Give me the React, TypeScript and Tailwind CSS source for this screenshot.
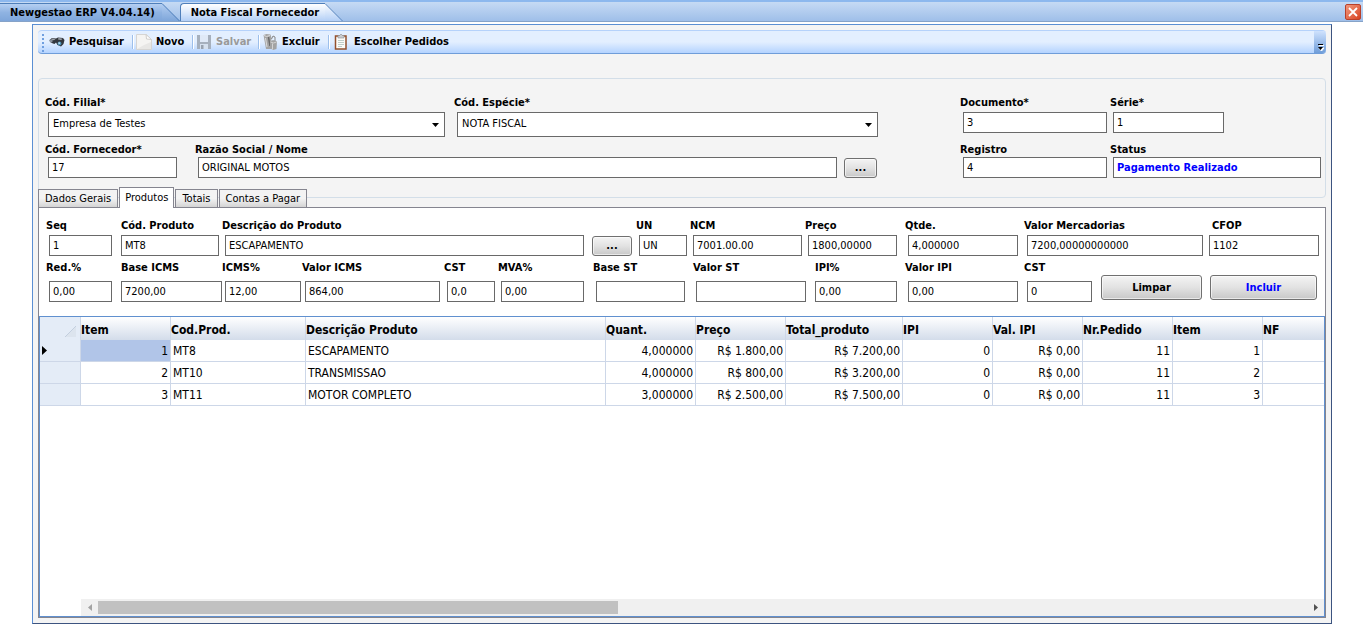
import type { ReactNode } from "react";
import { clsx } from "clsx";

type field_inset = "input" | "label" | "none";

type field_props = {
  id: string;
  label: string;
  value?: string;
  className?: string;
  inset?: field_inset;
  input_class?: string;
};

type product_row = {
  item: number;
  code: string;
  description: string;
  quantity: string;
  price: string;
  total: string;
};

const PRODUCT_ROWS: product_row[] = [
  { item: 1, code: "MT8", description: "ESCAPAMENTO", quantity: "4,000000", price: "R$ 1.800,00", total: "R$ 7.200,00" },
  { item: 2, code: "MT10", description: "TRANSMISSAO", quantity: "4,000000", price: "R$ 800,00", total: "R$ 3.200,00" },
  { item: 3, code: "MT11", description: "MOTOR COMPLETO", quantity: "3,000000", price: "R$ 2.500,00", total: "R$ 7.500,00" },
];

const GRID_HEADERS = [
  "Item",
  "Cod.Prod.",
  "Descrição Produto",
  "Quant.",
  "Preço",
  "Total_produto",
  "IPI",
  "Val. IPI",
  "Nr.Pedido",
  "Item",
  "NF",
];

const DETAIL_TABS = ["Dados Gerais", "Produtos", "Totais", "Contas a Pagar"];

export default function App() {
  return (
    <div className="flex min-h-screen flex-col bg-white font-['DejaVu_Sans_Condensed','Noto_Sans',sans-serif] text-[11px] leading-4 text-black">
      <WindowTabs />
      <main className="mt-0.5 mr-[31px] mb-0.5 ml-8 flex flex-1 flex-col border border-t-[#5b8fd3] border-r-[#3c5480] border-b-[#3c5480] border-l-[#5b8fd3] bg-[#f4f4f4] p-[5px]">
        <Toolbar />
        <InvoiceHeader />
        <DetailTabs />
        <section className="flex flex-1 flex-col border border-[#85858f] bg-white">
          <ProductForm />
          <ProductGrid />
        </section>
      </main>
    </div>
  );
}

function WindowTabs() {
  return (
    <header className="flex h-[22px] items-end border-t-2 border-b border-t-[#8db8ee] border-b-[#86a3c8] bg-linear-to-b from-[#c6daf4] to-[#9fbfe9]">
      <button type="button" className="flex h-[18px] font-bold">
        <span className="h-full border-t border-[#4f7fba] bg-linear-to-b from-[#b5cff2] via-[#8fb3e2] to-[#7ea6da] pr-[7px] pl-[10px] leading-[17px]">
          Newgestao ERP V4.04.14)
        </span>
        <TabSlant id="tab_back" from="#b5cff2" to="#7ea6da" />
      </button>
      <button type="button" className="flex h-[18px] font-bold">
        <span className="h-full rounded-tl-sm border-t border-l border-[#4f7fba] bg-linear-to-b from-white via-[#dce9fb] to-[#b3cff6] pr-1.5 pl-[10px] leading-[17px]">
          Nota Fiscal Fornecedor
        </span>
        <TabSlant id="tab_front" from="#ffffff" to="#b3cff6" />
      </button>
      <button
        type="button"
        aria-label="Fechar"
        className="mr-0.5 ml-auto flex h-4 w-4 items-center justify-center self-center rounded-xs border border-[#b8402a] bg-linear-to-br from-[#f0977c] to-[#d8401c]"
      >
        <svg viewBox="0 0 10 10" className="h-2.5 w-2.5 shrink-0" stroke="white" strokeWidth="1.8">
          <path d="M1 1l8 8M9 1L1 9" />
        </svg>
      </button>
    </header>
  );
}

function TabSlant({ id, from, to }: { id: string; from: string; to: string }) {
  return (
    <svg width="18" height="18" viewBox="0 0 18 18" aria-hidden="true">
      <defs>
        <linearGradient id={id} x1="0" y1="0" x2="0" y2="1">
          <stop offset="0" stopColor={from} />
          <stop offset="1" stopColor={to} />
        </linearGradient>
      </defs>
      <path d="M0 0L18 18H0z" fill={`url(#${id})`} />
      <path d="M0 .5L17.5 18" fill="none" stroke="#4f7fba" />
    </svg>
  );
}

function Toolbar() {
  return (
    <div className="flex h-6 items-stretch rounded-sm border-t border-b border-t-[#b5d2fb] border-b-[#6f9dd9] bg-linear-to-b from-[#e3efff] from-50% to-[#b4d3ff]">
      <svg width="8" height="22" viewBox="0 0 8 22" fill="#6f9fe0" aria-hidden="true">
        <path d="M4 3h2v2H4zM4 7h2v2H4zM4 11h2v2H4zM4 15h2v2H4zM4 19h2v2H4z" />
      </svg>
      <ToolButton className="w-[86px]" label="Pesquisar" icon={<BinocularsIcon />} />
      <ToolDivider />
      <ToolButton className="w-[59px]" label="Novo" icon={<PageIcon />} />
      <ToolDivider />
      <ToolButton className="w-[65px]" label="Salvar" icon={<DisketteIcon />} disabled />
      <ToolDivider />
      <ToolButton className="w-[69px]" label="Excluir" icon={<TrashIcon />} />
      <ToolDivider />
      <ToolButton className="w-[130px]" label="Escolher Pedidos" icon={<ClipboardIcon />} />
      <button
        type="button"
        aria-label="Mais opções"
        className="ml-auto flex w-3 items-end justify-center rounded-r-sm bg-linear-to-b from-[#cfe2fd] to-[#6f9dd9] pb-0.5"
      >
        <svg width="7" height="7" viewBox="0 0 7 7">
          <path d="M2 1.500h5M2 4h5L4.500 7z" stroke="white" fill="white" />
          <path d="M1 0h5v1H1zM1 3h5L3.500 6z" />
        </svg>
      </button>
    </div>
  );
}

type tool_button_props = {
  label: string;
  icon: ReactNode;
  className: string;
  disabled?: boolean;
};

function ToolButton({ label, icon, className, disabled }: tool_button_props) {
  return (
    <button
      type="button"
      disabled={disabled}
      className={clsx(
        "flex items-center gap-1 pl-[3px] font-bold whitespace-nowrap disabled:text-[#999999]",
        className,
      )}
    >
      {icon}
      {label}
    </button>
  );
}

function ToolDivider() {
  return <span className="my-1 w-px bg-[#9dbfeb] shadow-[1px_0_0_white]" />;
}

function InvoiceHeader() {
  return (
    <section className="mt-6 rounded-sm border border-[#d3dee8] pt-[15px] pr-1 pb-[19px] pl-1.5">
      <div className="flex items-start [&_label]:mb-0.5">
        <SelectField id="filial" label="Cód. Filial*" value="Empresa de Testes" className="mr-[9px] w-[400px]" />
        <SelectField id="especie" label="Cód. Espécie*" value="NOTA FISCAL" className="mr-[82px] flex-1" />
        <Field id="documento" label="Documento*" value="3" className="mr-[3px] w-[147px]" />
        <Field id="serie" label="Série*" value="1" className="mr-[97px] w-[114px]" />
      </div>
      <div className="mt-1 flex items-start">
        <Field id="fornecedor" label="Cód. Fornecedor*" value="17" className="mr-[18px] w-[132px]" />
        <Field id="razao" label="Razão Social / Nome" value="ORIGINAL MOTOS" className="mr-[7px] flex-1" />
        <PushButton className="mr-[83px] h-5 w-[33px] self-end">...</PushButton>
        <Field id="registro" label="Registro" value="4" className="mr-[3px] w-[147px]" />
        <Field
          id="status"
          label="Status"
          value="Pagamento Realizado"
          className="w-[211px]"
          input_class="font-bold text-[#0000ff]"
        />
      </div>
    </section>
  );
}

function DetailTabs() {
  return (
    <div role="tablist" className="-mt-[11px] flex h-5 items-end gap-px">
      {DETAIL_TABS.map((tab) => {
        const active = tab === "Produtos";

        return (
          <button
            key={tab}
            type="button"
            role="tab"
            aria-selected={active}
            className={clsx(
              "border border-b-0 border-[#85858f] whitespace-nowrap",
              active
                ? "relative -mb-px h-[21px] bg-white px-[5px]"
                : "h-[18px] bg-linear-to-b from-[#f3f3f3] from-50% to-[#d4d4d4] px-1.5",
            )}
          >
            {tab}
          </button>
        );
      })}
    </div>
  );
}

function ProductForm() {
  return (
    <form className="pt-[9px] pr-[6px] pl-[7px]" onSubmit={(event) => event.preventDefault()}>
      <div className="flex items-start [&_label]:mb-0.5">
        <Field id="seq" label="Seq" value="1" className="mr-[9px] w-[66px]" />
        <Field id="cod_produto" label="Cód. Produto" value="MT8" inset="none" className="mr-[3px] w-[98px]" />
        <Field id="descricao" label="Descrição do Produto" value="ESCAPAMENTO" className="mr-2 flex-1" />
        <PushButton className="mr-1 h-5 w-10 self-end">...</PushButton>
        <Field id="un" label="UN" value="UN" className="mr-[3px] w-[51px]" />
        <Field id="ncm" label="NCM" value="7001.00.00" className="mr-[3px] w-[112px]" />
        <Field id="preco" label="Preço" value="1800,00000" className="mr-2 w-[92px]" />
        <Field id="qtde" label="Qtde." value="4,000000" className="mr-1.5 w-[113px]" />
        <Field id="valor_merc" label="Valor Mercadorias" value="7200,00000000000" className="mr-1.5 w-[179px]" />
        <Field id="cfop" label="CFOP" value="1102" inset="label" className="w-[110px]" />
      </div>
      <div className="mt-[3px] flex items-start [&_label]:mb-1.5">
        <Field id="red" label="Red.%" value="0,00" className="mr-[9px] w-[66px]" />
        <Field id="base_icms" label="Base ICMS" value="7200,00" inset="none" className="w-[101px]" />
        <Field id="icms" label="ICMS%" value="12,00" className="mr-[1px] w-[79px]" />
        <Field id="valor_icms" label="Valor ICMS" value="864,00" className="mr-1 flex-1" />
        <Field id="cst_icms" label="CST" value="0,0" className="mr-[3px] w-[51px]" />
        <Field id="mva" label="MVA%" value="0,00" className="mr-[9px] w-[86px]" />
        <Field id="base_st" label="Base ST" className="mr-2 w-[92px]" />
        <Field id="valor_st" label="Valor ST" className="mr-[9px] w-[113px]" />
        <Field id="ipi" label="IPI%" value="0,00" inset="none" className="mr-2 w-[82px]" />
        <Field id="valor_ipi" label="Valor IPI" value="0,00" className="mr-1.5 w-[113px]" />
        <Field id="cst_ipi" label="CST" value="0" className="mr-[9px] w-[68px]" />
        <PushButton className="mt-4 mr-2 h-[25px] w-[101px]">Limpar</PushButton>
        <PushButton className="mt-4 mr-0.5 h-[25px] w-[107px] text-[#0000ff]">Incluir</PushButton>
      </div>
    </form>
  );
}

function Field({ id, label, value = "", className, inset = "input", input_class }: field_props) {
  return (
    <div className={clsx("flex min-w-0 flex-col", className)}>
      <label
        htmlFor={id}
        className={clsx("h-4 leading-[18px] font-bold whitespace-nowrap", inset === "label" && "pl-[3px]")}
      >
        {label}
      </label>
      <div className={clsx("flex", inset === "input" && "pl-[3px]")}>
        <input
          id={id}
          defaultValue={value}
          className={clsx("h-[21px] w-full min-w-0 border border-[#696969] bg-white px-[3px] outline-none", input_class)}
        />
      </div>
    </div>
  );
}

function SelectField({ id, label, value, className }: field_props) {
  return (
    <div className={clsx("flex min-w-0 flex-col", className)}>
      <label htmlFor={id} className="h-4 leading-[18px] font-bold whitespace-nowrap">
        {label}
      </label>
      <div className="relative flex pl-[3px]">
        <select
          id={id}
          defaultValue={value}
          className="h-[25px] w-full appearance-none border border-[#696969] bg-white px-1 pb-0.5 outline-none"
        >
          <option>{value}</option>
        </select>
        <svg
          viewBox="0 0 7 4"
          aria-hidden="true"
          className="pointer-events-none absolute top-[11px] right-1.5 h-1 w-[7px]"
        >
          <path d="M0 0h7L3.500 4z" />
        </svg>
      </div>
    </div>
  );
}

function PushButton({ className, children }: { className: string; children: ReactNode }) {
  return (
    <button
      type="button"
      className={clsx(
        "flex items-center justify-center rounded-[3px] border border-[#707070] bg-linear-to-b from-[#f4f4f4] via-[#e2e2e2] to-[#c8c8c8] font-bold inset-ring inset-ring-white/60",
        className,
      )}
    >
      {children}
    </button>
  );
}

function ProductGrid() {
  return (
    <div className="mt-[14px] flex flex-1 flex-col overflow-hidden border border-[#6090cf]">
      <table className="w-full table-fixed border-separate border-spacing-0 text-xs leading-4">
        <colgroup>
          <col className="w-[41px]" />
          <col className="w-[90px]" />
          <col className="w-[135px]" />
          <col className="w-[300px]" />
          <col className="w-[90px]" />
          <col className="w-[90px]" />
          <col className="w-[117px]" />
          <col className="w-[90px]" />
          <col className="w-[90px]" />
          <col className="w-[90px]" />
          <col className="w-[90px]" />
          <col />
        </colgroup>
        <thead>
          <tr className="h-[23px]">
            <th className="border-r border-[#cdd7e8] bg-[#e4ecf7] p-0">
              <svg width="11" height="11" viewBox="0 0 11 11" className="mt-1.5 mr-1 ml-auto" aria-hidden="true">
                <path d="M11 0v11H0z" fill="#dce4ee" />
                <path d="M11 0L0 11" stroke="#c3cfdf" />
              </svg>
            </th>
            {GRID_HEADERS.map((header, index) => (
              <th
                key={index}
                className="border-r border-[#cdd7e8] bg-linear-to-b from-white to-[#d3dcea] px-0 pt-0.5 pb-0 text-left font-bold last:border-r-0"
              >
                {header}
              </th>
            ))}
          </tr>
        </thead>
        <tbody>
          {PRODUCT_ROWS.map((row) => (
            <ProductLine key={row.item} row={row} selected={row.item === 1} />
          ))}
        </tbody>
      </table>
      <GridScrollbar />
    </div>
  );
}

function ProductLine({ row, selected }: { row: product_row; selected: boolean }) {
  return (
    <tr className="h-[22px]">
      <td className="border-r border-b border-[#cdd7e8] bg-[#e4ecf7] p-0">
        {selected && (
          <svg width="5" height="9" viewBox="0 0 5 9" className="ml-0.5" aria-hidden="true">
            <path d="M0 0l5 4.500L0 9z" />
          </svg>
        )}
      </td>
      <GridCell numeric className={selected ? "bg-[#b1c5e8]" : undefined}>
        {row.item}
      </GridCell>
      <GridCell>{row.code}</GridCell>
      <GridCell>{row.description}</GridCell>
      <GridCell numeric>{row.quantity}</GridCell>
      <GridCell numeric>{row.price}</GridCell>
      <GridCell numeric>{row.total}</GridCell>
      <GridCell numeric>0</GridCell>
      <GridCell numeric>R$ 0,00</GridCell>
      <GridCell numeric>11</GridCell>
      <GridCell numeric>{row.item}</GridCell>
      <GridCell />
    </tr>
  );
}

type grid_cell_props = {
  children?: ReactNode;
  numeric?: boolean;
  className?: string;
};

function GridCell({ children, numeric, className }: grid_cell_props) {
  return (
    <td
      className={clsx(
        "border-r border-b border-[#cdd7e8] px-0.5 py-0 whitespace-nowrap last:border-r-0",
        numeric && "text-right",
        className,
      )}
    >
      {children}
    </td>
  );
}

function GridScrollbar() {
  return (
    <div className="mt-auto ml-[41px] flex h-[17px] items-center bg-[#f0f0f0]">
      <span className="flex w-[17px] justify-center">
        <svg width="4" height="7" viewBox="0 0 4 7" fill="#a3a3a3">
          <path d="M4 0v7L0 3.500z" />
        </svg>
      </span>
      <span className="flex-1">
        <span className="block h-[13px] w-[43%] bg-[#c1c1c1]" />
      </span>
      <span className="flex w-[17px] justify-center">
        <svg width="4" height="7" viewBox="0 0 4 7" fill="#505050">
          <path d="M0 0v7l4-3.500z" />
        </svg>
      </span>
    </div>
  );
}

function BinocularsIcon() {
  return (
    <svg width="16" height="16" viewBox="0 0 16 16" aria-hidden="true">
      <path d="M.5 6L3 4l4 .5 2-1 5 .5 1.500 2-1 4-2.500 2.500-3.500-1.500L7 8.500 5.500 10 4 9.500 1 8z" fill="#33373d" />
      <path d="M3 4.500l3.500.5-1.500 1.200-2.500-.4zM9.500 4l4 .7-1.300 1.300-3.200-.5z" fill="#a2a8b0" />
      <ellipse cx="2.200" cy="6.800" rx="1.500" ry="1.500" fill="#8a929c" />
      <ellipse cx="10.500" cy="9.500" rx="1.900" ry="2" fill="#4d8fb3" />
      <ellipse cx="10.200" cy="9.100" rx=".9" ry=".9" fill="#c7e4f0" />
    </svg>
  );
}

function PageIcon() {
  return (
    <svg width="16" height="16" viewBox="0 0 16 16" aria-hidden="true">
      <path d="M.5.5H10l5.500 5v10H.5z" fill="#f5f4f2" stroke="#d6d5d3" />
      <path d="M1 15h14V8L8 11z" fill="#e8e7e5" />
      <path d="M10 .5l.5 4.500 5 .5z" fill="#fff" stroke="#cfcecc" />
    </svg>
  );
}

function DisketteIcon() {
  return (
    <svg width="16" height="16" viewBox="0 0 16 16" aria-hidden="true">
      <path d="M1 1h14v14H1z" fill="#a6b0bd" />
      <path d="M4 1h8v7H4z" fill="#dfe9f7" />
      <path d="M4 10h8v5H4z" fill="#d5e0ee" />
      <path d="M5 11h2.500v4H5z" fill="#98a2af" />
    </svg>
  );
}

function TrashIcon() {
  return (
    <svg width="16" height="16" viewBox="0 0 16 16" aria-hidden="true">
      <path d="M1.500 1l3-1 4 .5 1 3.500-.5 11H4z" fill="#a5a5a5" />
      <path d="M2 1.500l2.500 1 3.500-1M3.500 4l1.500 9" fill="none" stroke="#dcdcdc" />
      <path d="M6.500 3L8 12" fill="none" stroke="#6b6b6b" strokeWidth="1.500" />
      <path d="M8 7.500l3-1.500 4 1.500-.5 7.500-3.500 1-3-2z" fill="#a3a3a3" />
      <path d="M8.500 8l3 1 3-1M10.500 9.500v6" fill="none" stroke="#d4d4d4" />
      <path d="M9.500 5l1.500-3 2 1v4" fill="none" stroke="#858585" />
    </svg>
  );
}

function ClipboardIcon() {
  return (
    <svg width="18" height="16" viewBox="-2 0 18 16" aria-hidden="true">
      <path d="M1.500 2h10.500v13h-10.500z" fill="#fbfbf8" stroke="#93502c" strokeWidth="1.500" />
      <path d="M4 1.500h1.500L7 0l1.500 1.500H10V4H4z" fill="#c9ccd0" stroke="#8a8d92" strokeWidth=".6" />
      <path d="M4 6.500h6M4 8.500h6M4 10.500h6M4 12.500h4" stroke="#bfcdc9" />
    </svg>
  );
}
